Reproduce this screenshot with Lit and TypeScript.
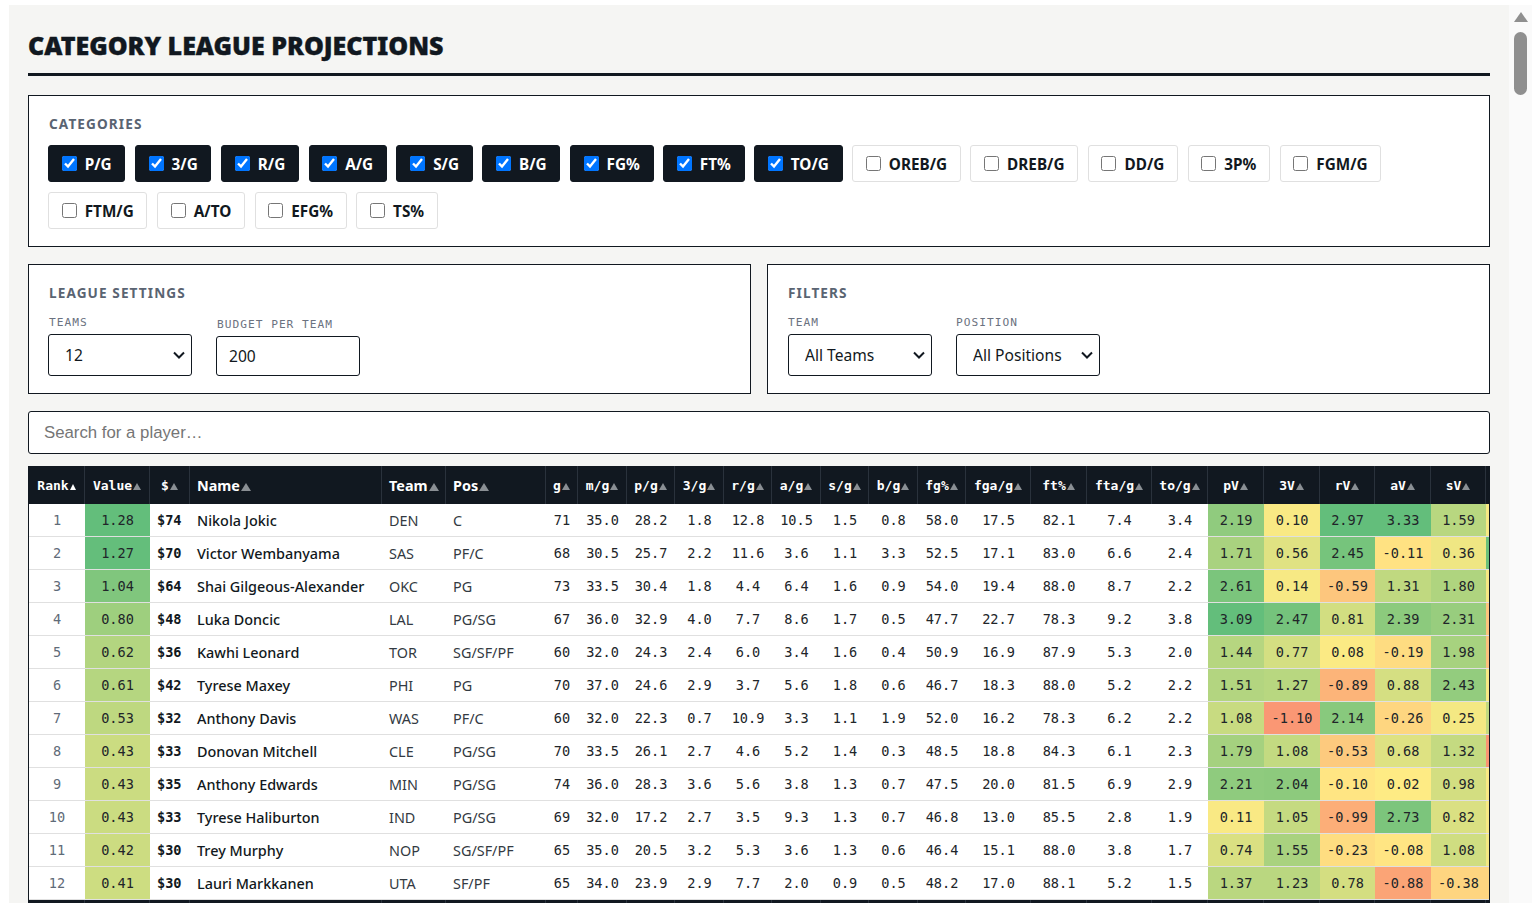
import { LitElement, html, css } from 'lit';
import { customElement } from 'lit/decorators.js';

const CHECKED = ['P/G', '3/G', 'R/G', 'A/G', 'S/G', 'B/G', 'FG%', 'FT%', 'TO/G'];
const CATEGORIES = [...CHECKED, 'OREB/G', 'DREB/G', 'DD/G', '3P%', 'FGM/G', 'FTM/G', 'A/TO', 'EFG%', 'TS%'];

const COL_WIDTHS = [56, 65, 40, 192, 64, 100, 32, 49, 48, 49, 48, 49, 48, 49, 48, 65, 56, 65, 56, 56, 56, 55, 56, 55, 56];
const STAT_HEADS = ['g', 'm/g', 'p/g', '3/g', 'r/g', 'a/g', 's/g', 'b/g', 'fg%', 'fga/g', 'ft%', 'fta/g', 'to/g'];
const VALUE_HEADS = ['pV', '3V', 'rV', 'aV', 'sV'];

// colour scale bounds per value column: [min, max]
const VALUE_RANGES: [number, number][] = [[-1.8, 3.09], [-1.7, 2.8], [-2.1, 2.8], [-1.6, 3.25], [-2.2, 3.5]];
const TAIL_RANGE: [number, number] = [-1.5, 4];

type Row = [string, string, string, string, string, string[], string[], number];

const ROWS: Row[] = [
  ['1.28', '$74', 'Nikola Jokic', 'DEN', 'C', ['71', '35.0', '28.2', '1.8', '12.8', '10.5', '1.5', '0.8', '58.0', '17.5', '82.1', '7.4', '3.4'], ['2.19', '0.10', '2.97', '3.33', '1.59'], 0.2],
  ['1.27', '$70', 'Victor Wembanyama', 'SAS', 'PF/C', ['68', '30.5', '25.7', '2.2', '11.6', '3.6', '1.1', '3.3', '52.5', '17.1', '83.0', '6.6', '2.4'], ['1.71', '0.56', '2.45', '-0.11', '0.36'], 3.8],
  ['1.04', '$64', 'Shai Gilgeous-Alexander', 'OKC', 'PG', ['73', '33.5', '30.4', '1.8', '4.4', '6.4', '1.6', '0.9', '54.0', '19.4', '88.0', '8.7', '2.2'], ['2.61', '0.14', '-0.59', '1.31', '1.80'], 0.25],
  ['0.80', '$48', 'Luka Doncic', 'LAL', 'PG/SG', ['67', '36.0', '32.9', '4.0', '7.7', '8.6', '1.7', '0.5', '47.7', '22.7', '78.3', '9.2', '3.8'], ['3.09', '2.47', '0.81', '2.39', '2.31'], -0.45],
  ['0.62', '$36', 'Kawhi Leonard', 'TOR', 'SG/SF/PF', ['60', '32.0', '24.3', '2.4', '6.0', '3.4', '1.6', '0.4', '50.9', '16.9', '87.9', '5.3', '2.0'], ['1.44', '0.77', '0.08', '-0.19', '1.98'], -0.5],
  ['0.61', '$42', 'Tyrese Maxey', 'PHI', 'PG', ['70', '37.0', '24.6', '2.9', '3.7', '5.6', '1.8', '0.6', '46.7', '18.3', '88.0', '5.2', '2.2'], ['1.51', '1.27', '-0.89', '0.88', '2.43'], 0.2],
  ['0.53', '$32', 'Anthony Davis', 'WAS', 'PF/C', ['60', '32.0', '22.3', '0.7', '10.9', '3.3', '1.1', '1.9', '52.0', '16.2', '78.3', '6.2', '2.2'], ['1.08', '-1.10', '2.14', '-0.26', '0.25'], 1.6],
  ['0.43', '$33', 'Donovan Mitchell', 'CLE', 'PG/SG', ['70', '33.5', '26.1', '2.7', '4.6', '5.2', '1.4', '0.3', '48.5', '18.8', '84.3', '6.1', '2.3'], ['1.79', '1.08', '-0.53', '0.68', '1.32'], -1],
  ['0.43', '$35', 'Anthony Edwards', 'MIN', 'PG/SG', ['74', '36.0', '28.3', '3.6', '5.6', '3.8', '1.3', '0.7', '47.5', '20.0', '81.5', '6.9', '2.9'], ['2.21', '2.04', '-0.10', '0.02', '0.98'], 0.15],
  ['0.43', '$33', 'Tyrese Haliburton', 'IND', 'PG/SG', ['69', '32.0', '17.2', '2.7', '3.5', '9.3', '1.3', '0.7', '46.8', '13.0', '85.5', '2.8', '1.9'], ['0.11', '1.05', '-0.99', '2.73', '0.82'], 0.2],
  ['0.42', '$30', 'Trey Murphy', 'NOP', 'SG/SF/PF', ['65', '35.0', '20.5', '3.2', '5.3', '3.6', '1.3', '0.6', '46.4', '15.1', '88.0', '3.8', '1.7'], ['0.74', '1.55', '-0.23', '-0.08', '1.08'], 0.3],
  ['0.41', '$30', 'Lauri Markkanen', 'UTA', 'SF/PF', ['65', '34.0', '23.9', '2.9', '7.7', '2.0', '0.9', '0.5', '48.2', '17.0', '88.1', '5.2', '1.5'], ['1.37', '1.23', '0.78', '-0.88', '-0.38'], -0.25],
];

const RED = [248, 105, 107];
const YELLOW = [255, 235, 132];
const GREEN = [99, 190, 123];

function mix(a: number[], b: number[], t: number) {
  const c = a.map((v, i) => Math.round(v + (b[i] - v) * Math.min(1, t)));
  return `rgb(${c[0]},${c[1]},${c[2]})`;
}

function heat(v: number, [min, max]: [number, number]) {
  return v >= 0 ? mix(YELLOW, GREEN, v / max) : mix(YELLOW, RED, v / min);
}

@customElement('app-root')
export class AppRoot extends LitElement {
  static styles = css`
    :host {
      display: flex;
      height: 903px;
      overflow: hidden;
      padding: 5px 8px 0 9px;
      box-sizing: border-box;
      background: #fff;
      font-family: 'Noto Sans', sans-serif;
      color: #111820;
    }
    .page {
      width: 1500px;
      flex: none;
      box-sizing: border-box;
      padding: 0 19px;
      background: #f5f5f3;
      overflow: hidden;
    }
    h1 {
      margin: 0 0 19px;
      padding: 25px 0 13px;
      border-bottom: 3px solid #111820;
      font-size: 25px;
      line-height: 30px;
      font-weight: 900;
      text-transform: uppercase;
      -webkit-text-stroke: 0.4px #111820;
    }
    .panel {
      box-sizing: border-box;
      border: 1px solid #111820;
      background: #fff;
      padding: 19px 19px 17px;
    }
    .panel-title {
      padding-left: 1px;
      font-size: 13.6px;
      line-height: 18px;
      font-weight: 700;
      letter-spacing: 1.1px;
      color: #5a6472;
      text-transform: uppercase;
      margin-bottom: 12px;
    }
    .chips {
      display: flex;
      flex-wrap: wrap;
      gap: 10px 9.6px;
    }
    .chip {
      display: flex;
      align-items: center;
      gap: 8px;
      height: 37px;
      box-sizing: border-box;
      padding: 1px 12.7px 0;
      border: 1px solid #e0e0e0;
      border-radius: 3px;
      font-size: 15.3px;
      font-weight: 700;
    }
    .chip.on {
      background: #111820;
      border-color: #111820;
      color: #fff;
    }
    .chip input {
      width: 15px;
      height: 15px;
      margin: -1px 0 0;
    }
    .settings {
      display: grid;
      grid-template-columns: 1fr 1fr;
      gap: 16px;
      margin: 17px 0;
    }
    .settings .panel {
      height: 130px;
    }
    .settings .panel-title {
      margin-bottom: 14px;
    }
    .settings .filters {
      padding-left: 20px;
    }
    .filters .panel-title,
    .filters .field label {
      padding-left: 0;
    }
    .fields {
      display: flex;
      align-items: flex-end;
      gap: 24px;
    }
    .field {
      display: flex;
      flex-direction: column;
      width: 144px;
    }
    .field label {
      padding-left: 1px;
      font-family: 'DejaVu Sans Mono', monospace;
      font-size: 11.2px;
      line-height: 14px;
      letter-spacing: 1px;
      color: #6b7280;
      text-transform: uppercase;
      margin-bottom: 4px;
    }
    select,
    .field input {
      box-sizing: border-box;
      width: 144px;
      border: 1px solid #111820;
      border-radius: 3px;
      background: #fff;
      color: #111820;
      font-family: 'Noto Sans', sans-serif;
      font-size: 15.6px;
      padding: 0 12px;
      margin: 0;
    }
    select {
      height: 42px;
      padding-left: 16px;
      appearance: none;
      background: #fff url("data:image/svg+xml,%3Csvg xmlns='http://www.w3.org/2000/svg' width='12' height='8'%3E%3Cpath d='M1 1.5l5 5 5-5' fill='none' stroke='%23111820' stroke-width='2'/%3E%3C/svg%3E") no-repeat right 6px center;
    }
    .field input {
      height: 40px;
    }
    .search {
      display: block;
      box-sizing: border-box;
      width: 100%;
      height: 43px;
      margin: 0 0 12px;
      padding: 0 15px;
      border: 1px solid #111820;
      border-radius: 3px;
      background: #fff;
      font-family: 'Liberation Sans', sans-serif;
      font-size: 16.8px;
    }
    .search::placeholder {
      color: #757575;
    }
    .table-wrap {
      border: solid #111820;
      border-width: 0 1px;
      background: #fff;
      overflow: hidden;
    }
    table {
      border-collapse: separate;
      border-spacing: 0;
      table-layout: fixed;
      width: 1512px;
    }
    th {
      height: 38px;
      padding: 1px 0 0;
      box-sizing: border-box;
      background: #111820;
      color: #fff;
      border-right: 1px solid #2a323c;
      text-align: center;
      white-space: nowrap;
      overflow: hidden;
      font-family: 'DejaVu Sans Mono', monospace;
      font-size: 13px;
      font-weight: 700;
    }
    th.sans {
      padding: 0 0 0 7px;
      text-align: left;
      font-family: 'Noto Sans', sans-serif;
      font-size: 14.4px;
    }
    .sort {
      display: inline-block;
      margin-left: 1px;
      border: solid transparent;
      border-width: 0 4px 7px;
      border-bottom-color: #8a8f94;
    }
    .sans .sort {
      border-width: 0 5px 8px;
    }
    .sort.active {
      border-width: 0 3px 6px;
      border-bottom-color: #fff;
    }
    td {
      height: 33px;
      padding: 0;
      box-sizing: border-box;
      border-bottom: 1px solid #e0e0e0;
      text-align: center;
      white-space: nowrap;
      font-family: 'DejaVu Sans Mono', monospace;
      font-size: 13.6px;
      color: #212529;
    }
    td.rank {
      color: #5f6b78;
    }
    td.price {
      text-align: left;
      padding-left: 7px;
      font-weight: 700;
      color: #111820;
    }
    td.text {
      text-align: left;
      padding-left: 7px;
      font-family: 'Noto Sans', sans-serif;
      font-size: 14.4px;
      color: #333a42;
    }
    td.name {
      font-weight: 500;
      color: #111820;
    }
    tfoot td {
      background: #111820;
      border-bottom: 0;
      border-right: 1px solid #2a323c;
    }
    .scrollbar {
      width: 23px;
      flex: none;
      display: flex;
      flex-direction: column;
      align-items: flex-start;
      padding: 7px 0 0 5px;
      box-sizing: border-box;
      background: #fafafa;
    }
    .scrollbar svg {
      display: block;
      margin-bottom: 10px;
    }
    .thumb {
      width: 13px;
      height: 63px;
      border-radius: 7px;
      background: #8f8f8f;
    }
  `;

  private head(label: string, cls = '', sortCls = '') {
    return html`<th class=${cls}>${label}<span class="sort ${sortCls}"></span></th>`;
  }

  render() {
    return html`
      <div class="page">
        <h1>Category League Projections</h1>

        <section class="panel">
          <div class="panel-title">Categories</div>
          <div class="chips">
            ${CATEGORIES.map((c) => {
              const on = CHECKED.includes(c);
              return html`<label class="chip ${on ? 'on' : ''}"><input type="checkbox" .checked=${on} />${c}</label>`;
            })}
          </div>
        </section>

        <div class="settings">
          <section class="panel">
            <div class="panel-title">League Settings</div>
            <div class="fields">
              <div class="field">
                <label>Teams</label>
                <select><option>12</option></select>
              </div>
              <div class="field">
                <label>Budget per team</label>
                <input type="text" value="200" />
              </div>
            </div>
          </section>
          <section class="panel filters">
            <div class="panel-title">Filters</div>
            <div class="fields">
              <div class="field">
                <label>Team</label>
                <select><option>All Teams</option></select>
              </div>
              <div class="field">
                <label>Position</label>
                <select><option>All Positions</option></select>
              </div>
            </div>
          </section>
        </div>

        <input class="search" type="text" placeholder="Search for a player…" />

        <div class="table-wrap">
          <table>
            <colgroup>
              ${COL_WIDTHS.map((w) => html`<col style="width:${w}px" />`)}
            </colgroup>
            <thead>
              <tr>
                ${this.head('Rank', '', 'active')} ${this.head('Value')} ${this.head('$')}
                ${this.head('Name', 'sans')} ${this.head('Team', 'sans')} ${this.head('Pos', 'sans')}
                ${STAT_HEADS.map((h) => this.head(h))}
                ${VALUE_HEADS.map((h) => this.head(h))}
                <th></th>
              </tr>
            </thead>
            <tbody>
              ${ROWS.map((r, i) => this.renderRow(r, i))}
            </tbody>
            <tfoot>
              <tr>${COL_WIDTHS.map(() => html`<td></td>`)}</tr>
            </tfoot>
          </table>
        </div>
      </div>

      <div class="scrollbar">
        <svg width="14" height="10" viewBox="0 0 14 10"><path d="M7 0 L14 10 H0 Z" fill="#8f8f8f" /></svg>
        <div class="thumb"></div>
      </div>
    `;
  }

  private renderRow([value, price, name, team, pos, stats, vals, tail]: Row, i: number) {
    return html`<tr>
      <td class="rank">${i + 1}</td>
      <td style="background:${heat(+value, [0, 1.28])}">${value}</td>
      <td class="price">${price}</td>
      <td class="text name">${name}</td>
      <td class="text">${team}</td>
      <td class="text">${pos}</td>
      ${stats.map((s) => html`<td>${s}</td>`)}
      ${vals.map((v, c) => html`<td style="background:${heat(+v, VALUE_RANGES[c])}">${v}</td>`)}
      <td style="background:${heat(tail, TAIL_RANGE)}"></td>
    </tr>`;
  }
}
